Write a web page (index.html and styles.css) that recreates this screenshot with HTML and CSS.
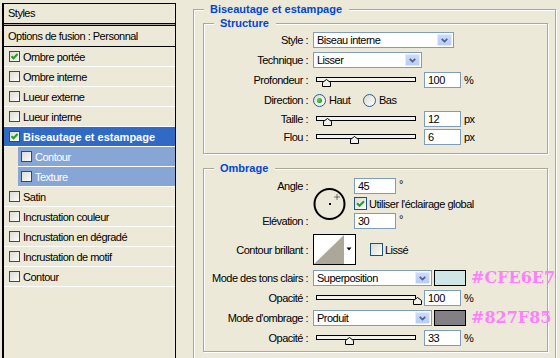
FILE: index.html
```html
<!DOCTYPE html>
<html lang="fr">
<head>
<meta charset="utf-8">
<title>Styles de calque</title>
<link rel="stylesheet" href="styles.css">
</head>
<body>
<div class="left">
  <div class="styles-head">Styles</div>
  <div class="sep"></div>
  <div class="opts">Options de fusion : Personnal</div>
  <ul class="fx">
    <li class="fx-item"><span class="cb"><svg width="9" height="9" viewBox="0 0 9 9"><path d="M1.5 4.2 L3.5 6.3 L7.6 2" stroke="#21A121" stroke-width="2" fill="none"/></svg></span>Ombre portée</li>
    <li class="fx-item"><span class="cb"></span>Ombre interne</li>
    <li class="fx-item"><span class="cb"></span>Lueur externe</li>
    <li class="fx-item"><span class="cb"></span>Lueur interne</li>
    <li class="fx-item sel"><span class="cb"><svg width="9" height="9" viewBox="0 0 9 9"><path d="M1.5 4.2 L3.5 6.3 L7.6 2" stroke="#21A121" stroke-width="2" fill="none"/></svg></span>Biseautage et estampage</li>
    <li class="fx-item sub"><span class="cb"></span>Contour</li>
    <li class="fx-item sub"><span class="cb"></span>Texture</li>
    <li class="fx-item"><span class="cb"></span>Satin</li>
    <li class="fx-item"><span class="cb"></span>Incrustation couleur</li>
    <li class="fx-item"><span class="cb"></span>Incrustation en dégradé</li>
    <li class="fx-item"><span class="cb"></span>Incrustation de motif</li>
    <li class="fx-item"><span class="cb"></span>Contour</li>
  </ul>
</div>

<div class="right">
  <section class="group outer">
    <div class="gtitle">Biseautage et estampage</div>

    <section class="group inner structure">
      <div class="gtitle">Structure</div>
      <div class="row">
        <span class="lbl">Style :</span>
        <div class="select w-style"><span>Biseau interne</span><span class="dd"><svg width="15" height="11" viewBox="0 0 15 11"><path d="M4.3 3.5 L7.5 6.7 L10.7 3.5" stroke="#4D6185" stroke-width="2" fill="none"/></svg></span></div>
      </div>
      <div class="row">
        <span class="lbl">Technique :</span>
        <div class="select w-tech"><span>Lisser</span><span class="dd"><svg width="15" height="11" viewBox="0 0 15 11"><path d="M4.3 3.5 L7.5 6.7 L10.7 3.5" stroke="#4D6185" stroke-width="2" fill="none"/></svg></span></div>
      </div>
      <div class="row">
        <span class="lbl">Profondeur :</span>
        <div class="slider"><div class="track"></div><svg class="thumb" style="left:9px" width="9" height="8" viewBox="0 0 9 8"><polygon points="0.5,7.5 0.5,3.5 4.5,0.5 8.5,3.5 8.5,7.5" fill="#F2F1EA" stroke="#000"/></svg></div>
        <span class="num">100</span><span class="unit">%</span>
      </div>
      <div class="row">
        <span class="lbl">Direction :</span>
        <span class="opt first"><span class="radio on"></span>Haut</span>
        <span class="opt"><span class="radio"></span>Bas</span>
      </div>
      <div class="row h17">
        <span class="lbl">Taille :</span>
        <div class="slider"><div class="track"></div><svg class="thumb" style="left:10px" width="9" height="8" viewBox="0 0 9 8"><polygon points="0.5,7.5 0.5,3.5 4.5,0.5 8.5,3.5 8.5,7.5" fill="#F2F1EA" stroke="#000"/></svg></div>
        <span class="num">12</span><span class="unit">px</span>
      </div>
      <div class="row">
        <span class="lbl">Flou :</span>
        <div class="slider"><div class="track"></div><svg class="thumb" style="left:37px" width="9" height="8" viewBox="0 0 9 8"><polygon points="0.5,7.5 0.5,3.5 4.5,0.5 8.5,3.5 8.5,7.5" fill="#F2F1EA" stroke="#000"/></svg></div>
        <span class="num">6</span><span class="unit">px</span>
      </div>
    </section>

    <section class="group inner ombrage">
      <div class="gtitle">Ombrage</div>
      <div class="angle">
        <span class="lbl a1">Angle :</span>
        <svg class="dial" width="34" height="34" viewBox="0 0 34 34"><circle cx="16.5" cy="17" r="15" fill="none" stroke="#000" stroke-width="2"/><rect x="16" y="16" width="2" height="2" fill="#000"/><path d="M24 7.5 V12.5 M21.5 10 H26.5" stroke="#000" stroke-width="1" stroke-dasharray="1 1"/></svg>
        <span class="rc r1"><span class="num wide">45</span><span class="deg">°</span></span>
        <span class="rc r2"><span class="cb big"><svg width="11" height="11" viewBox="0 0 11 11"><path d="M2 5.3 L4.5 7.8 L9 3.2" stroke="#21A121" stroke-width="2" fill="none"/></svg></span>Utiliser l'éclairage global</span>
        <span class="lbl a3">Elévation :</span>
        <span class="rc r3"><span class="num wide">30</span><span class="deg">°</span></span>
      </div>
      <div class="row contour-row">
        <span class="lbl">Contour brillant :</span>
        <svg class="contour" width="43" height="31" viewBox="0 0 43 31"><rect x="0.5" y="0.5" width="42" height="30" fill="#fff" stroke="#000"/><polygon points="1,30 31,1 31,30" fill="#ACA899"/><polygon points="33.5,13.5 38.5,13.5 36,16.5" fill="#000"/></svg>
        <span class="lisse"><span class="cb big"></span>Lissé</span>
      </div>
      <div class="row first-mode">
        <span class="lbl">Mode des tons clairs :</span>
        <div class="select w-mode"><span>Superposition</span><span class="dd"><svg width="15" height="11" viewBox="0 0 15 11"><path d="M4.3 3.5 L7.5 6.7 L10.7 3.5" stroke="#4D6185" stroke-width="2" fill="none"/></svg></span></div>
        <span class="swatch" style="background:#CFE6E7"></span>
        <span class="hex">#CFE6E7</span>
      </div>
      <div class="row">
        <span class="lbl">Opacité :</span>
        <div class="slider"><div class="track"></div><svg class="thumb" style="left:100px" width="9" height="8" viewBox="0 0 9 8"><polygon points="0.5,7.5 0.5,3.5 4.5,0.5 8.5,3.5 8.5,7.5" fill="#F2F1EA" stroke="#000"/></svg></div>
        <span class="num">100</span><span class="unit">%</span>
      </div>
      <div class="row">
        <span class="lbl">Mode d'ombrage :</span>
        <div class="select w-mode"><span>Produit</span><span class="dd"><svg width="15" height="11" viewBox="0 0 15 11"><path d="M4.3 3.5 L7.5 6.7 L10.7 3.5" stroke="#4D6185" stroke-width="2" fill="none"/></svg></span></div>
        <span class="swatch" style="background:#827F85"></span>
        <span class="hex">#827F85</span>
      </div>
      <div class="row">
        <span class="lbl">Opacité :</span>
        <div class="slider"><div class="track"></div><svg class="thumb" style="left:32px" width="9" height="8" viewBox="0 0 9 8"><polygon points="0.5,7.5 0.5,3.5 4.5,0.5 8.5,3.5 8.5,7.5" fill="#F2F1EA" stroke="#000"/></svg></div>
        <span class="num">33</span><span class="unit">%</span>
      </div>
    </section>
  </section>
</div>
</body>
</html>
```
FILE: styles.css
```css
* { box-sizing: border-box; margin: 0; padding: 0; }

html, body { width: 560px; height: 358px; overflow: hidden; }

body {
  background: #ECE9D8;
  font-family: "Liberation Sans", Arial, sans-serif;
  font-size: 11px;
  letter-spacing: -0.5px;
  color: #000;
  display: flex;
  align-items: flex-start;
}

/* ---------- left panel ---------- */
.left {
  flex: none;
  width: 174px;
  height: 355px;
  margin: 3px 0 0 2px;
  border: 1px solid #000;
  border-left-width: 2px;
  border-bottom: none;
}
.styles-head {
  height: 20px;
  line-height: 19px;
  padding-left: 4px;
  border-bottom: 1px solid #000;
}
.sep {
  height: 2px;
  border-top: 1px solid #ACA899;
  border-bottom: 1px solid #000;
}
.opts {
  height: 21px;
  line-height: 20px;
  padding-left: 4px;
  border-bottom: 1px solid #000;
}
.fx { list-style: none; }
.fx-item {
  height: 20px;
  display: flex;
  align-items: center;
  gap: 3px;
  padding-left: 5px;
  border-bottom: 1px solid #fff;
}
.fx-item.sel {
  background: #316AC5;
  color: #fff;
  font-weight: bold;
  letter-spacing: 0;
}
.fx-item.sub {
  margin-left: 14px;
  padding-left: 3px;
  background: #87A6D6;
  color: #fff;
}
.cb {
  flex: none;
  width: 11px;
  height: 11px;
  border: 1px solid #1C5180;
  background: linear-gradient(135deg, #DCDCD6 0%, #F2F2EE 70%, #FFFFFF 100%);
  display: flex;
  align-items: center;
  justify-content: center;
}
.cb svg { display: block; }
.cb.big { width: 13px; height: 13px; }

/* ---------- right panel ---------- */
.right {
  flex: none;
  margin-left: 17px;
  padding-top: 9px;
}
.group {
  border: 1px solid #ACA899;
  box-shadow: inset 1px 1px 0 #fff, 1px 1px 0 #fff;
}
.outer { width: 363px; height: 349px; border-bottom: none; }
.inner { width: 345px; margin: 7px 0 0 9px; }
.structure { padding-bottom: 6px; }
.ombrage { margin-top: 14px; padding-bottom: 3px; }

.gtitle {
  width: fit-content;
  margin: -8px 0 0 10px;
  padding: 0 7px 0 6px;
  line-height: 14px;
  background: #ECE9D8;
  color: #0046D5;
  font-weight: bold;
  letter-spacing: 0;
}

.row {
  display: flex;
  align-items: center;
  height: 20px;
}
.row.h17 { height: 17px; }
.lbl {
  flex: none;
  width: 109px;
  padding-right: 5px;
  text-align: right;
}

.select {
  flex: none;
  height: 16px;
  border: 1px solid #7F9DB9;
  background: #fff;
  padding-left: 3px;
  display: flex;
  align-items: center;
  justify-content: space-between;
}
.select .dd {
  width: 15px;
  height: 12px;
  margin: 0 1px 0 0;
  border: 1px solid #E3EBFD;
  border-radius: 1px;
  background: linear-gradient(180deg, #CCDAFC 0%, #B9CCF9 100%);
  display: flex;
  align-items: center;
  justify-content: center;
}
.select .dd svg { display: block; }
.w-style { width: 141px; }
.w-tech { width: 109px; }
.w-mode { width: 119px; }

.slider {
  flex: none;
  position: relative;
  width: 106px;
  height: 14px;
}
.track {
  margin: 4px 0 0 3px;
  width: 100px;
  height: 5px;
  border: 1px solid #000;
  background: #F3F2EC;
}
.thumb { position: absolute; top: 6px; display: block; }

.num {
  flex: none;
  width: 37px;
  height: 16px;
  margin-left: 5px;
  padding-left: 3px;
  line-height: 14px;
  border: 1px solid #7F9DB9;
  background: #fff;
}
.num.wide { width: 42px; margin-left: 0; }
.unit { margin-left: 3px; }
.deg { margin-left: 3px; align-self: flex-start; line-height: 12px; }

.opt {
  display: flex;
  align-items: center;
  gap: 3px;
}
.opt.first { width: 50px; }
.radio {
  flex: none;
  width: 13px;
  height: 13px;
  border-radius: 50%;
  border: 1px solid #2A5C8E;
  background: linear-gradient(135deg, #DCDCD6 0%, #F4F4F0 70%, #fff 100%);
  display: flex;
  align-items: center;
  justify-content: center;
}
.radio.on::after {
  content: "";
  width: 5px;
  height: 5px;
  border-radius: 50%;
  background: radial-gradient(circle at 40% 40%, #5FD35F 0%, #21A121 70%);
}

/* angle block */
.angle {
  display: grid;
  grid-template-columns: 109px 41px auto;
  grid-template-rows: 16px 19px 16px;
  margin-top: 3px;
}
.angle .a1 { grid-column: 1; grid-row: 1; align-self: center; }
.angle .a3 { grid-column: 1; grid-row: 3; align-self: center; }
.dial { grid-column: 2; grid-row: 1 / 4; align-self: center; display: block; }
.rc { grid-column: 3; display: flex; align-items: center; }
.rc.r1 { grid-row: 1; }
.rc.r2 { grid-row: 2; gap: 2px; }
.rc.r3 { grid-row: 3; }

.contour-row { height: 31px; margin-top: 5px; }
.contour { flex: none; display: block; }
.lisse {
  display: flex;
  align-items: center;
  gap: 2px;
  margin-left: 14px;
}

.first-mode { margin-top: 3px; }
.swatch {
  flex: none;
  width: 32px;
  height: 16px;
  margin-left: 2px;
  border: 1px solid #000;
}
.hex {
  margin-left: 5px;
  font-family: "DejaVu Serif", "Liberation Serif", serif;
  font-weight: bold;
  font-size: 16px;
  letter-spacing: 0;
  color: #FF80FF;
  line-height: 16px;
}
```
